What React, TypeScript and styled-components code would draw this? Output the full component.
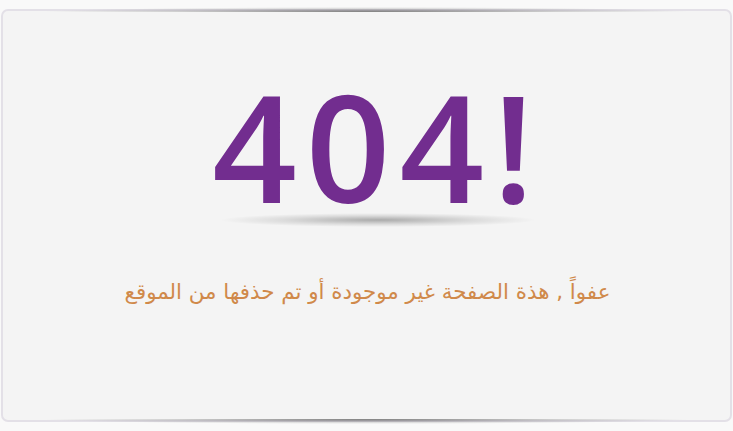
import React from "react";
import styled, { createGlobalStyle } from "styled-components";

const Global = createGlobalStyle`
  html, body { margin: 0; padding: 0; background: #f9f9f9; }
  body { font-family: "Open Sans", "DejaVu Sans", sans-serif; }
`;

const Page = styled.div`
  padding: 9px 1px 9px 1px;
`;

const Card = styled.div`
  position: relative;
  height: 409px;
  border: 2px solid #e3e0e7;
  border-radius: 7px;
  background: #f4f4f4;
  display: flex;
  flex-direction: column;
  align-items: center;

  &::before, &::after {
    content: "";
    position: absolute;
    left: 40px;
    right: 40px;
    height: 10px;
    pointer-events: none;
  }
  &::before {
    top: -9px;
    background: radial-gradient(ellipse 50% 50% at 50% 100%, rgba(0,0,0,0.5), rgba(0,0,0,0.15) 60%, rgba(0,0,0,0) 100%);
  }
  &::after {
    bottom: -9px;
    background: radial-gradient(ellipse 50% 50% at 50% 0%, rgba(0,0,0,0.5), rgba(0,0,0,0.15) 60%, rgba(0,0,0,0) 100%);
  }
`;

const Title = styled.h1`
  margin: 61px 0 0 22px;
  font-family: "Open Sans", sans-serif;
  font-weight: 600;
  font-size: 148px;
  letter-spacing: 9px;
  line-height: 1;
  color: #722d8f;
`;

const TitleShadow = styled.div`
  width: 316px;
  height: 14px;
  margin: -7px 0 0 22px;
  background: radial-gradient(ellipse 50% 50% at 50% 50%, rgba(0,0,0,0.3), rgba(0,0,0,0.1) 60%, rgba(0,0,0,0) 100%);
`;

const Message = styled.p`
  margin: 52px 0 0 2px;
  direction: rtl;
  font-family: "DejaVu Sans", sans-serif;
  font-size: 21.4px;
  color: #d0894a;
`;

export default function App() {
  return (
    <>
      <Global />
      <Page>
        <Card>
          <Title>404!</Title>
          <TitleShadow />
          <Message>عفواً , هذة الصفحة غير موجودة أو تم حذفها من الموقع</Message>
        </Card>
      </Page>
    </>
  );
}
